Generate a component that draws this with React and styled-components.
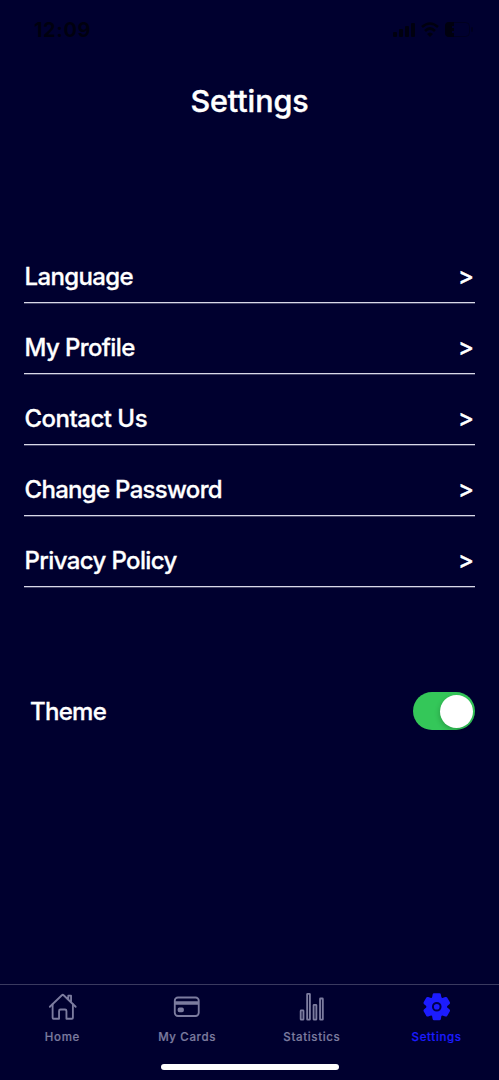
import React from "react";
import styled, { createGlobalStyle } from "styled-components";

const GlobalStyle = createGlobalStyle`
  * { box-sizing: border-box; }
  body { margin: 0; background: #00002f; }
`;

const Screen = styled.div`
  display: flex;
  flex-direction: column;
  height: 1080px;
  background: #00002f;
  color: #fff;
  font-family: Inter, "Liberation Sans", sans-serif;
  overflow: hidden;
`;

const StatusBar = styled.header`
  display: flex;
  justify-content: space-between;
  align-items: center;
  height: 60px;
  padding: 0 25px 0 34px;
  color: #00000f;
`;

const Clock = styled.span`
  font-size: 20px;
  font-weight: 700;
  line-height: 24px;
  letter-spacing: 0.5px;
`;

const Title = styled.h1`
  margin: 18px 0 0;
  height: 46px;
  text-align: center;
  font-size: 30.5px;
  font-weight: 500;
  line-height: 45px;
  letter-spacing: -0.1px;
  -webkit-text-stroke: 0.4px currentColor;
`;

const Menu = styled.nav`
  display: flex;
  flex-direction: column;
  margin: 108px 24px 0;
`;

const MenuRow = styled.a`
  display: flex;
  justify-content: space-between;
  align-items: flex-end;
  height: 71px;
  padding: 0 1px 9px 0.5px;
  border-bottom: 1px solid #d8d8e8;
  box-shadow: 0 1px 0 rgba(216, 216, 232, 0.3);
  font-size: 24px;
  font-weight: 500;
  line-height: 32px;
  -webkit-text-stroke: 0.3px currentColor;
`;

const Label = styled.span`
  letter-spacing: ${({ $spacing }) => $spacing}px;
`;

const Chevron = styled.span`
  margin-bottom: 1px;
`;

const ThemeRow = styled.div`
  display: flex;
  justify-content: space-between;
  align-items: center;
  height: 38px;
  margin: 105px 24px 0 30px;
  font-size: 24px;
  font-weight: 500;
  -webkit-text-stroke: 0.3px currentColor;
`;

const Toggle = styled.span`
  display: flex;
  justify-content: flex-end;
  align-items: center;
  width: 62px;
  height: 38px;
  padding: 2.5px;
  border-radius: 19px;
  background: #34c759;
`;

const Knob = styled.span`
  width: 33px;
  height: 33px;
  border-radius: 50%;
  background: #fff;
  box-shadow: -1px 2px 5px rgba(0, 0, 0, 0.18);
`;

const TabBar = styled.footer`
  display: flex;
  flex-direction: column;
  align-items: center;
  height: 96px;
  margin-top: auto;
  border-top: 1px solid #3a3a60;
`;

const Tabs = styled.div`
  display: grid;
  grid-template-columns: repeat(4, 1fr);
  width: 100%;
  height: 79px;
`;

const Tab = styled.a`
  display: flex;
  flex-direction: column;
  align-items: center;
  padding-top: 7px;
  color: ${({ $active }) => ($active ? "#1c1cff" : "#7c7c9f")};
  font-size: 11.5px;
  font-weight: 500;
  line-height: 14px;
  letter-spacing: 0.65px;
  -webkit-text-stroke: 0.2px currentColor;

  svg { margin-bottom: 8px; }
`;

const HomeIndicator = styled.div`
  width: 178px;
  height: 6px;
  border-radius: 3px;
  background: #fff;
`;

const OutlineIcon = ({ children }) => (
  <svg width="29.5" height="29.5" viewBox="0 0 512 512" fill="none" stroke="currentColor" strokeWidth="32" strokeLinecap="round" strokeLinejoin="round">
    {children}
  </svg>
);

const HomeIcon = () => (
  <OutlineIcon>
    <path d="M80 212v236a16 16 0 0016 16h96V328a24 24 0 0124-24h80a24 24 0 0124 24v136h96a16 16 0 0016-16V212" />
    <path d="M480 256L266.89 52c-5-5.28-16.69-5.34-21.78 0L32 256M400 179V64h-48v69" />
  </OutlineIcon>
);

const CardIcon = () => (
  <OutlineIcon>
    <rect x="48" y="96" width="416" height="320" rx="56" />
    <path d="M48 192h416M128 300h48v20h-48z" strokeWidth="60" strokeLinecap="butt" />
  </OutlineIcon>
);

const ChartIcon = () => (
  <OutlineIcon>
    <rect x="64" y="320" width="48" height="160" rx="8" />
    <rect x="288" y="224" width="48" height="256" rx="8" />
    <rect x="400" y="112" width="48" height="368" rx="8" />
    <rect x="176" y="32" width="48" height="448" rx="8" />
  </OutlineIcon>
);

const GearIcon = () => (
  <svg width="29.5" height="29.5" viewBox="-15 -15 30 30" fill="currentColor">
    <circle r="10.6" />
    {[0, 60, 120, 180, 240, 300].map((angle) => (
      <path key={angle} transform={`rotate(${angle})`} d="M-5-8L-4.2-12.4Q-4-13.8-2.8-13.8H2.8Q4-13.8 4.2-12.4L5-8Z" />
    ))}
    <circle r="3.9" fill="none" stroke="#00004e" strokeWidth="2" />
  </svg>
);

const StatusIcons = () => (
  <svg width="81" height="20" viewBox="0 0 81 20" fill="currentColor">
    <rect x="0" y="12" width="4" height="5" rx="1" />
    <rect x="6" y="9" width="4" height="8" rx="1" />
    <rect x="12" y="6" width="4" height="11" rx="1" />
    <rect x="18" y="3" width="4" height="14" rx="1" />
    <g fill="none" stroke="currentColor" strokeWidth="2.6">
      <path d="M29 7Q37 0 45 7M32 11Q37 6 42 11" />
    </g>
    <path d="M34 14Q37 11 40 14L37 17Z" />
    <rect x="52.5" y="2.5" width="24" height="14" rx="4" fill="none" stroke="currentColor" opacity=".5" />
    <path d="M56 2h5v4h-2v2h2v3h-2v2h2v4h-5q-4 0-4-4V6q0-4 4-4Z" />
    <rect x="78" y="7" width="2" height="5" rx="1" opacity=".5" />
  </svg>
);

const menuItems = [
  { label: "Language", spacing: -0.62 },
  { label: "My Profile", spacing: -0.62 },
  { label: "Contact Us", spacing: -0.5 },
  { label: "Change Password", spacing: -0.7 },
  { label: "Privacy Policy", spacing: -0.62 },
];

const tabs = [
  { label: "Home", Icon: HomeIcon },
  { label: "My Cards", Icon: CardIcon },
  { label: "Statistics", Icon: ChartIcon },
  { label: "Settings", Icon: GearIcon, active: true },
];

export default function App() {
  return (
    <Screen>
      <GlobalStyle />
      <StatusBar>
        <Clock>12:09</Clock>
        <StatusIcons />
      </StatusBar>
      <Title>Settings</Title>
      <Menu>
        {menuItems.map(({ label, spacing }) => (
          <MenuRow key={label}>
            <Label $spacing={spacing}>{label}</Label>
            <Chevron>&gt;</Chevron>
          </MenuRow>
        ))}
      </Menu>
      <ThemeRow>
        <Label $spacing={-0.7}>Theme</Label>
        <Toggle><Knob /></Toggle>
      </ThemeRow>
      <TabBar>
        <Tabs>
          {tabs.map(({ label, Icon, active }) => (
            <Tab key={label} $active={active}>
              <Icon />
              {label}
            </Tab>
          ))}
        </Tabs>
        <HomeIndicator />
      </TabBar>
    </Screen>
  );
}
